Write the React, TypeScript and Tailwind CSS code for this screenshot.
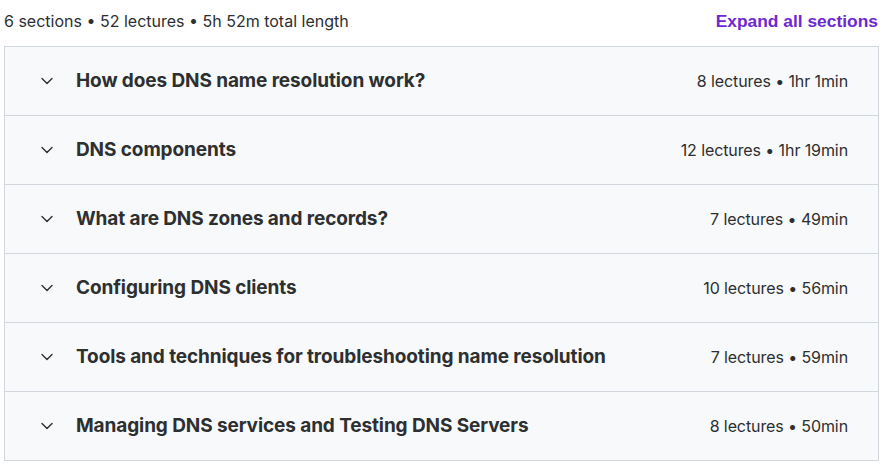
import React from "react";

const sections = [
  ["How does DNS name resolution work?", "8 lectures • 1hr 1min"],
  ["DNS components", "12 lectures • 1hr 19min"],
  ["What are DNS zones and records?", "7 lectures • 49min"],
  ["Configuring DNS clients", "10 lectures • 56min"],
  ["Tools and techniques for troubleshooting name resolution", "7 lectures • 59min"],
  ["Managing DNS services and Testing DNS Servers", "8 lectures • 50min"],
];

function Chevron() {
  return (
    <svg width="12" height="8" viewBox="0 0 12 8" fill="none" className="shrink-0">
      <path d="M1 1.5 L6 6.5 L11 1.5" stroke="#2d2f31" strokeWidth="1.4" strokeLinecap="round" strokeLinejoin="round" />
    </svg>
  );
}

export default function App() {
  return (
    <div className="w-[883px] h-[466px] bg-white text-[#2d2f31]" style={{ fontFamily: "Inter, 'Noto Sans', sans-serif" }}>
      <div className="flex items-center justify-between pl-[4px] pr-[5px] h-[42px]">
        <span className="text-[16px] text-[#2d2f31]">6 sections • 52 lectures • 5h 52m total length</span>
        <span className="text-[17.4px] font-bold text-[#6d28d2]" style={{ fontFamily: "'Liberation Sans', Arial, sans-serif" }}>Expand all sections</span>
      </div>
      <div className="ml-[4px] mt-[4px] w-[875px] border border-[#d1d7dc]">
        {sections.map(([title, meta], i) => (
          <div key={i} className={`flex items-center bg-[#f7f9fa] pl-[36px] pr-[30px] ${i > 0 ? "h-[69px] border-t border-[#d1d7dc]" : "h-[68px]"}`}>
            <Chevron />
            <span className="ml-[23px] flex-1 text-[19px] font-bold tracking-[-0.1px]">{title}</span>
            <span className="text-[16px] tracking-[-0.1px]">{meta}</span>
          </div>
        ))}
      </div>
    </div>
  );
}
